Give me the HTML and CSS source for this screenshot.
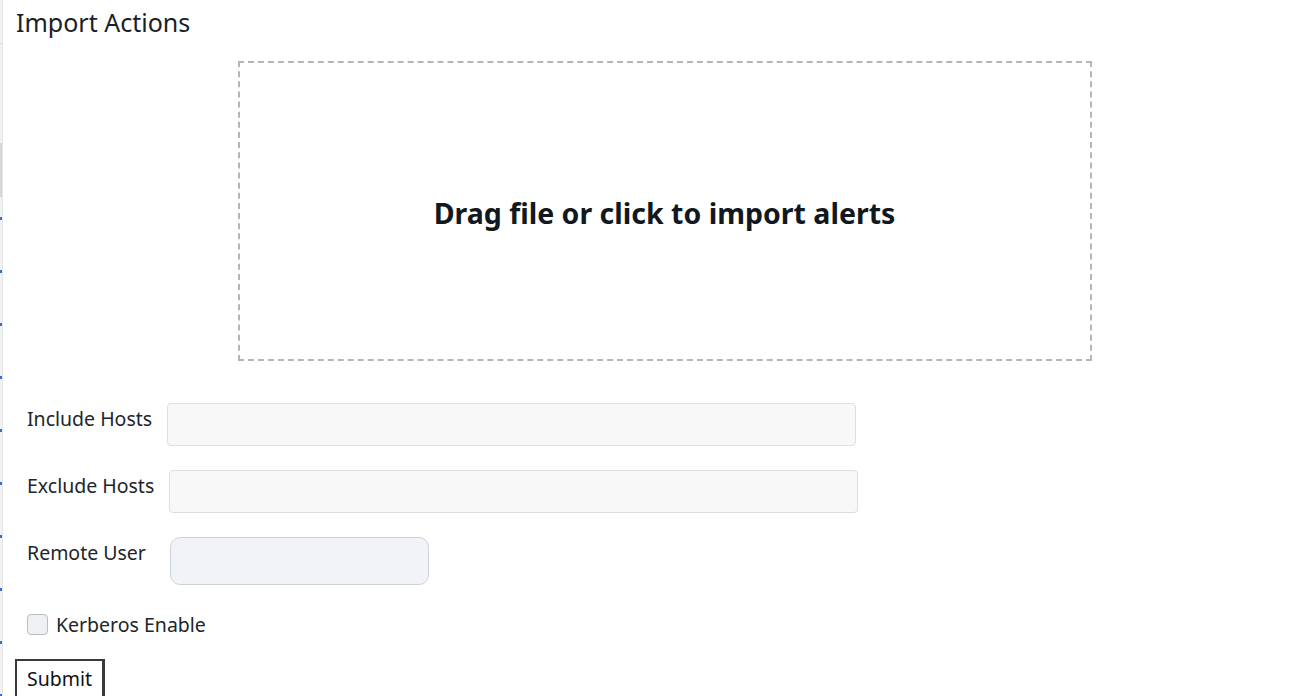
FILE: index.html
```html
<!DOCTYPE html>
<html lang="en">
<head>
  <meta charset="UTF-8">
  <title>Import Actions</title>
  <meta name="viewport" content="width=device-width, initial-scale=1">
  <link rel="stylesheet" href="styles.css">
</head>
<body>
  <div class="page-edge">
    <div class="edge-top"></div>
    <div class="edge-block"></div>
    <div class="edge-ticks"></div>
  </div>
  <div class="panel">
    <h2 class="panel-title">Import Actions</h2>
    <div class="dropzone" id="dropzone">
      <p>Drag file or click to import alerts</p>
      <input type="file" id="fileInput" hidden>
    </div>
    <form class="import-form" onsubmit="return false">
      <div class="form-row">
        <label for="includeHosts">Include Hosts</label>
        <input type="text" id="includeHosts" class="host-input">
      </div>
      <div class="form-row">
        <label for="excludeHosts">Exclude Hosts</label>
        <input type="text" id="excludeHosts" class="host-input">
      </div>
      <div class="form-row">
        <label for="remoteUser">Remote User</label>
        <input type="text" id="remoteUser" class="user-input">
      </div>
      <div class="check-row">
        <input type="checkbox" id="kerberos">
        <label for="kerberos">Kerberos Enable</label>
      </div>
      <button type="submit" class="submit-btn">Submit</button>
    </form>
  </div>
  <script>
    // open the file picker when the drop area is clicked
    document.getElementById('dropzone').addEventListener('click', () => {
      document.getElementById('fileInput').click();
    });
  </script>
</body>
</html>
```

FILE: styles.css
```css
html, body {
  height: 100%;
}
body {
  margin: 0;
  display: flex;
  background: #fff;
  font-family: "Noto Sans", "Open Sans", sans-serif;
  color: #212529;
  overflow: hidden;
}
.page-edge {
  width: 3px;
  flex-shrink: 0;
  background: #f2f2f2;
  border-right: 1px solid #e6e6e6;
  box-sizing: border-box;
  display: flex;
  flex-direction: column;
}
.edge-top {
  height: 43px;
  border-bottom: 1px solid #dcdcdc;
}
.edge-block {
  height: 54px;
  margin-top: 99px;
  background: #d6d6d6;
}
.edge-ticks {
  flex: 1;
  margin-top: 20px;
  background: repeating-linear-gradient(to bottom, #2f6fd6 0 3px, transparent 3px 53px);
  width: 2px;
}
.panel {
  flex: 1;
  padding: 4px 2px 0 13px;
}
.panel-title {
  margin: 0 0 21px;
  font-size: 25px;
  font-weight: 400;
  line-height: 36px;
  color: #1b2026;
}
.dropzone {
  width: 854px;
  height: 300px;
  margin: 0 auto;
  box-sizing: border-box;
  border: 2px dashed #b5b5b5;
  display: flex;
  align-items: center;
  justify-content: center;
  cursor: pointer;
}
.dropzone p {
  margin: 0;
  padding-top: 3px;
  font-size: 28.5px;
  font-weight: 700;
  color: #111820;
}
.import-form {
  margin-top: 42px;
  padding-left: 11px;
}
.form-row {
  display: flex;
  align-items: flex-start;
  margin-bottom: 24px;
}
.form-row label {
  font-size: 19.5px;
  line-height: 32px;
  margin-right: 15px;
  white-space: nowrap;
}
.host-input {
  width: 689px;
  height: 43px;
  box-sizing: border-box;
  border: 1px solid #dedede;
  border-radius: 4px;
  background: #f8f8f8;
  outline: none;
}
.user-input {
  width: 259px;
  height: 48px;
  margin-left: 9px;
  box-sizing: border-box;
  border: 1px solid #ced3db;
  border-radius: 10px;
  background: #f1f3f7;
  outline: none;
}
.check-row {
  display: flex;
  align-items: center;
  gap: 8px;
  height: 30px;
  margin-top: 23px;
  font-size: 19.5px;
}
.check-row input {
  appearance: none;
  width: 21px;
  height: 21px;
  margin: 0;
  border: 1px solid #b9bdc4;
  border-radius: 4px;
  background: #eef0f4;
}
.submit-btn {
  margin: 20px 0 0 -12px;
  font-family: inherit;
  font-size: 19.5px;
  color: #111;
  background: #fff;
  border: 2px solid #3a3a3a;
  border-right-width: 3px;
  border-bottom-width: 3px;
  padding: 3px 10px 4px;
  line-height: 30px;
}
```
